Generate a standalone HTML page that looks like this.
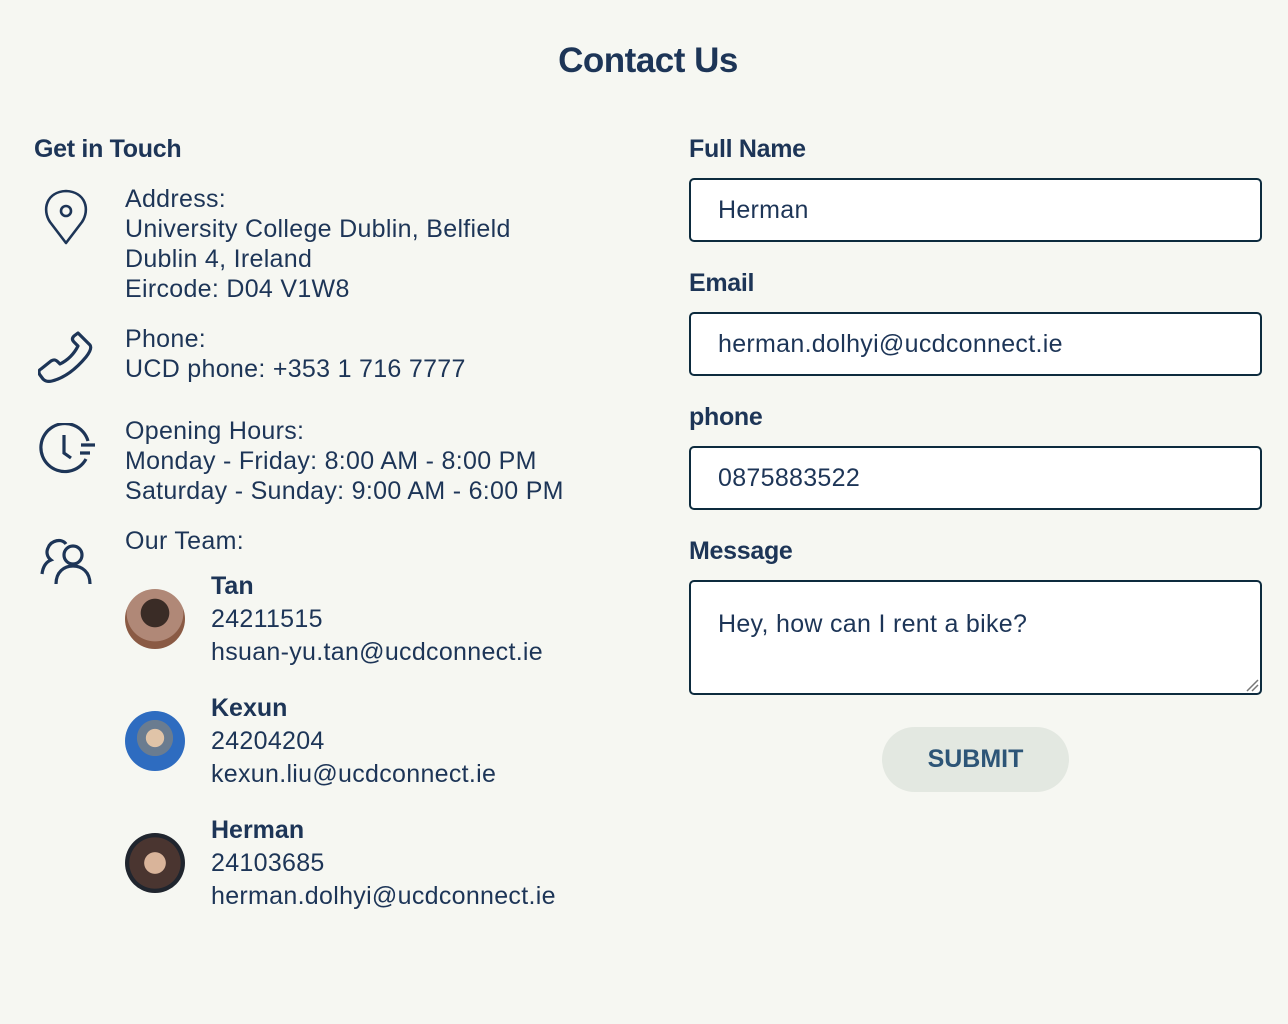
<!DOCTYPE html>
<html><head><meta charset="utf-8"><style>
body{margin:0;width:1288px;height:1024px;background:#f6f7f2;font-family:"Liberation Sans",sans-serif;color:#1d3557;position:relative;overflow:hidden}
.a{position:absolute;white-space:nowrap}
h1{position:absolute;margin:0;left:0;width:1296px;text-align:center;top:41px;font-size:35px;font-weight:bold;letter-spacing:-0.5px}
.t{font-size:25px;line-height:30px;letter-spacing:0.3px}
.lbl{font-size:25px;font-weight:bold;letter-spacing:-0.3px}
.in{position:absolute;left:689px;width:573px;border:2px solid #0d2b3e;border-radius:5px;background:#fff;box-sizing:border-box;font-size:25px;padding-left:27px;letter-spacing:0.3px}
.av{position:absolute;left:125px;width:60px;height:60px;border-radius:50%}
.nm{font-size:25px;font-weight:bold;line-height:33px}
.tm{font-size:25px;line-height:33px;letter-spacing:0.3px}
</style></head><body>
<h1>Contact Us</h1>
<div class="a lbl" style="left:34px;top:135px">Get in Touch</div>
<svg class="a" style="left:40px;top:188px" width="54" height="60" viewBox="0 0 54 60" fill="none" stroke="#1d3557" stroke-width="2.6" stroke-linejoin="round"><path d="M26 55 L10 34 C2 22 6 4 26 3 C46 4 50 22 42 34 Z"/><circle cx="26" cy="23" r="5"/></svg>
<div class="a t" style="left:125px;top:184px">Address:<br>University College Dublin, Belfield<br>Dublin 4, Ireland<br>Eircode: D04 V1W8</div>
<svg class="a" style="left:38px;top:330px" width="58" height="56" viewBox="0 0 58 56" fill="none" stroke="#1d3557" stroke-width="3.2" stroke-linejoin="round"><path d="M40 3 L52 15 C54 18 52 22 48 27 C38 39 26 48 14 51 C10 52 7 51 5 49 L2 45 C0 42 1 40 3 39 L13 31 C16 29 18 30 20 32 L22 34 C30 30 36 24 40 16 L36 12 C34 10 34 8 36 6 Z"/></svg>
<div class="a t" style="left:125px;top:324px">Phone:<br>UCD phone: +353 1 716 7777</div>
<svg class="a" style="left:38px;top:423px" width="58" height="52" viewBox="0 0 58 52" fill="none" stroke="#1d3557" stroke-width="3.2"><path d="M50 18 A24 24 0 1 0 48 36"/><path d="M26 12 V30 L33 35"/><path d="M43 22 H57 M42 30 H52"/></svg>
<div class="a t" style="left:125px;top:416px">Opening Hours:<br>Monday - Friday: 8:00 AM - 8:00 PM<br>Saturday - Sunday: 9:00 AM - 6:00 PM</div>
<svg class="a" style="left:40px;top:532px" width="54" height="54" viewBox="0 0 54 54" fill="none" stroke="#1d3557" stroke-width="3.2"><path d="M2 42 C3 34 6 30 11 28 C7 25 6 20 8 16 C11 8 22 6 26 12"/><circle cx="33" cy="23" r="9"/><path d="M16 52 C16 40 24 34 33 34 C42 34 50 40 50 52"/></svg>
<div class="a t" style="left:125px;top:526px">Our Team:</div>
<div class="av" style="top:589px;background:radial-gradient(circle at 50% 40%,#3a2c26 0 30%,#b08877 31% 60%,#8a5a44 61%)"></div>
<div class="a" style="left:211px;top:570px"><div class="nm">Tan</div><div class="tm">24211515<br>hsuan-yu.tan@ucdconnect.ie</div></div>
<div class="av" style="top:711px;background:radial-gradient(circle at 50% 45%,#e0c4a8 0 20%,#6a7c90 21% 40%,#2e6cc0 41%)"></div>
<div class="a" style="left:211px;top:692px"><div class="nm">Kexun</div><div class="tm">24204204<br>kexun.liu@ucdconnect.ie</div></div>
<div class="av" style="top:833px;background:radial-gradient(circle at 50% 50%,#d9b49a 0 25%,#4a3530 26% 60%,#20252e 61%)"></div>
<div class="a" style="left:211px;top:814px"><div class="nm">Herman</div><div class="tm">24103685<br>herman.dolhyi@ucdconnect.ie</div></div>

<div class="a lbl" style="left:689px;top:135px">Full Name</div>
<div class="in" style="top:178px;height:64px;line-height:61px">Herman</div>
<div class="a lbl" style="left:689px;top:269px">Email</div>
<div class="in" style="top:312px;height:64px;line-height:61px">herman.dolhyi@ucdconnect.ie</div>
<div class="a lbl" style="left:689px;top:403px">phone</div>
<div class="in" style="top:446px;height:64px;line-height:61px">0875883522</div>
<div class="a lbl" style="left:689px;top:537px">Message</div>
<div class="in" style="top:580px;height:115px;padding-top:27px;line-height:30px">Hey, how can I rent a bike?</div>
<svg class="a" style="left:1245px;top:678px" width="14" height="14"><path d="M2 13 L13 2 M7 13 L13 7" stroke="#777" stroke-width="1.5"/></svg>
<div class="a" style="left:882px;top:727px;width:187px;height:65px;border-radius:33px;background:#e3e8e1;color:#2d5577;font-weight:bold;font-size:25px;text-align:center;line-height:65px">SUBMIT</div>
</body></html>
